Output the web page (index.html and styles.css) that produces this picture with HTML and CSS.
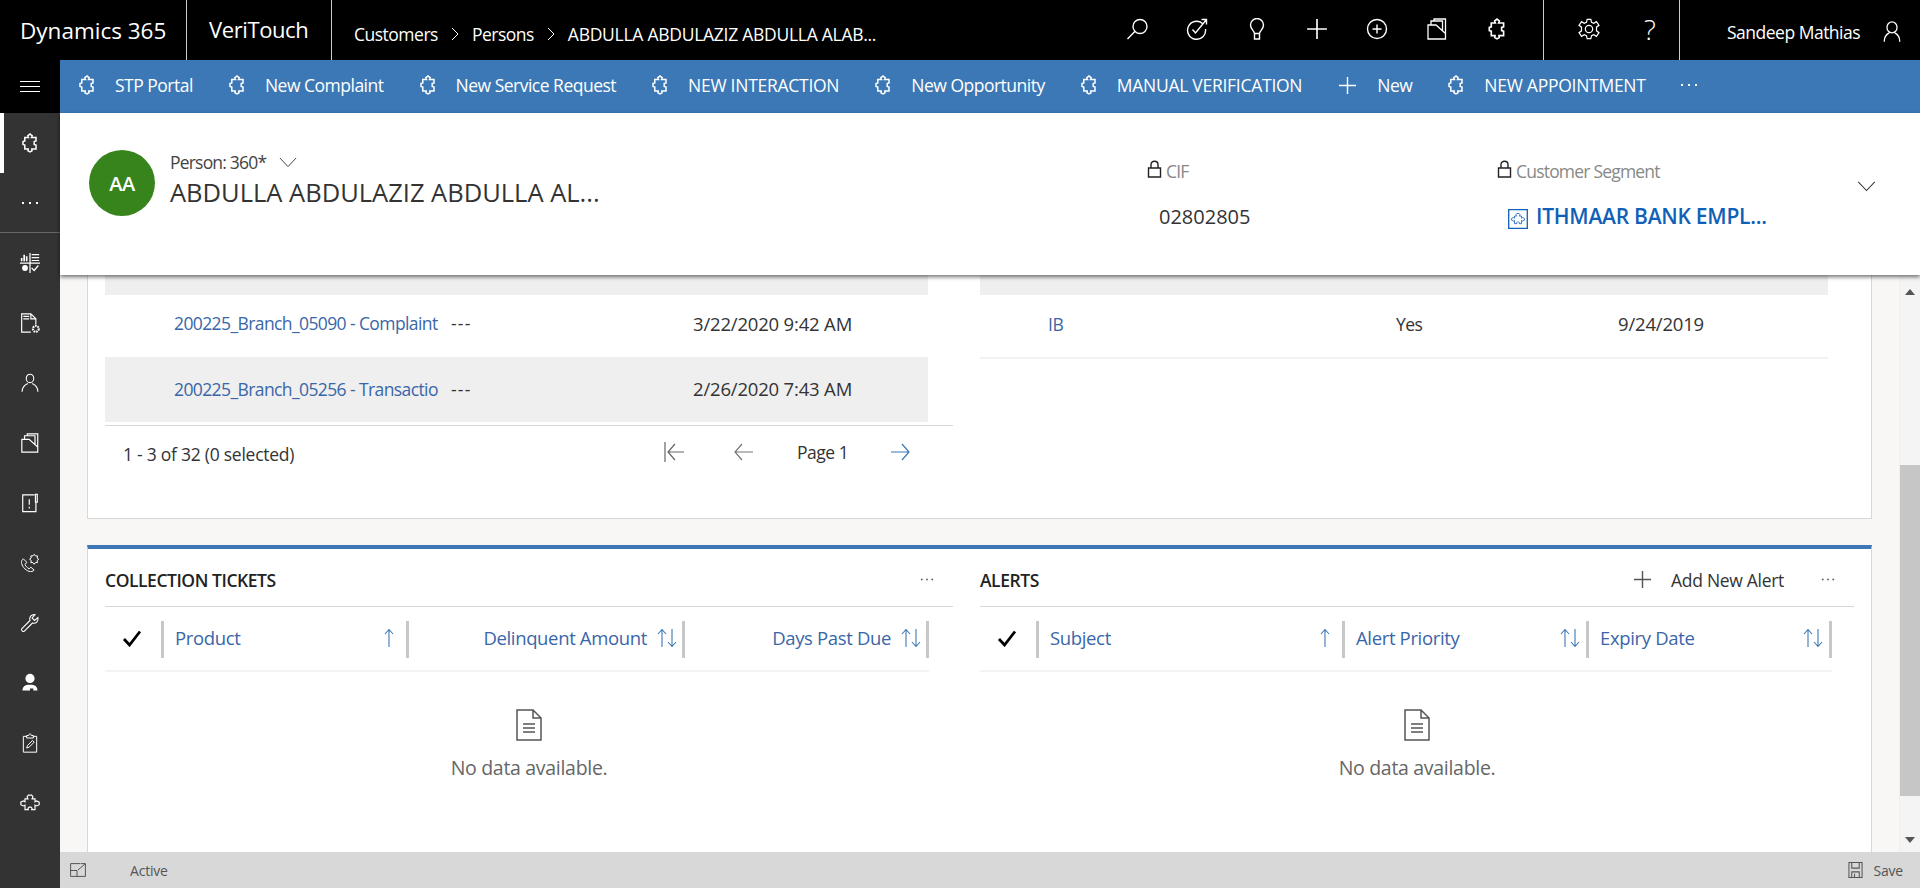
FILE: index.html
```html
<!DOCTYPE html>
<html lang="en">
  <head>
    <meta charset="UTF-8" />
    <title>Person: 360 - Dynamics 365</title>
    <link rel="stylesheet" href="styles.css">
  </head>
  <body>
    <!-- shared icons -->
    <svg class="defs" width="0" height="0">
      <symbol id="puzzle" viewBox="0 0 16 20">
        <path d="M6.500 4.500L5.800 2.800 8 1 10.200 2.800 9.500 4.500H14V8L12.200 8.500V11.500L14 12V16H9.800L10 17.800 8 19 6 17.800 6.200 16H2.800V12L1 11.500V8.500L2.800 8V4.500Z" fill="none" stroke="currentColor" stroke-width="1.500"/>
      </symbol>
      <symbol id="piece" viewBox="0 0 24 22">
        <path d="M6 6H9.500L8.500 3.500 10 1.500H14L15.500 3.500 14.500 6H18V9.500L20 8.500 23 10V13L20 14.500 18 13.500V19H14L14.500 17.500 13 16H11L9.500 17.500 10 19H6V13.500L4 14.500 1 13V10L4 8.500 6 9.500Z" fill="none" stroke="currentColor" stroke-width="1.400"/>
      </symbol>
      <symbol id="plus" viewBox="0 0 20 20">
        <path d="M10 1V19M1 10H19" fill="none" stroke="currentColor" stroke-width="1.500"/>
      </symbol>
      <symbol id="dots" viewBox="0 0 18 4">
        <path d="M1 1h2v2H1zM8 1h2v2H8zM15 1h2v2h-2z" fill="currentColor"/>
      </symbol>
      <symbol id="chev" viewBox="0 0 20 12">
        <path d="M1 1L10 10.500 19 1" fill="none" stroke="currentColor" stroke-width="1.100"/>
      </symbol>
      <symbol id="lock" viewBox="0 0 14 18">
        <path d="M1 8H13V17H1ZM3.500 8V4.500C3.500 .2 10.500 .2 10.500 4.500V8" fill="none" stroke="currentColor" stroke-width="1.400"/>
      </symbol>
      <symbol id="up" viewBox="0 0 10 20">
        <path d="M5 19V1.500M1 6L5 1.500 9 6" fill="none" stroke="currentColor" stroke-width="1.100"/>
      </symbol>
      <symbol id="updown" viewBox="0 0 20 20">
        <path d="M5 19V1.500M1 6L5 1.500 9 6M15 1V18.500M11 14L15 18.500 19 14" fill="none" stroke="currentColor" stroke-width="1.100"/>
      </symbol>
      <symbol id="check" viewBox="0 0 20 17">
        <path d="M2 9L7.500 15 18 1.500" fill="none" stroke="currentColor" stroke-width="2.800"/>
      </symbol>
      <symbol id="nodata" viewBox="0 0 26 32">
        <path d="M1 1H17L25 9V31H1ZM17 1V9H25M7 15H19M7 19H19M7 23H19" fill="none" stroke="currentColor" stroke-width="1.500"/>
      </symbol>
      <symbol id="folder" viewBox="0 0 20 22">
        <path d="M1 7H9L18.500 15.500V21H1ZM4 7V3H15.500V12.500M7 3V1H18.500V15.500" fill="none" stroke="currentColor" stroke-width="1.300"/>
      </symbol>
    </svg>

    <!-- BARRA SUPERIOR -->
    <header class="topbar">
      <div class="brand">Dynamics 365</div>
      <div class="app-name">VeriTouch</div>
      <nav class="crumbs">
        <span>Customers</span>
        <svg class="crumb-sep" viewBox="0 0 8 14"><path d="M1 1L7 7 1 13" fill="none" stroke="currentColor"/></svg>
        <span>Persons</span>
        <svg class="crumb-sep" viewBox="0 0 8 14"><path d="M1 1L7 7 1 13" fill="none" stroke="currentColor"/></svg>
        <span class="caps">ABDULLA ABDULAZIZ ABDULLA ALAB...</span>
      </nav>
      <div class="top-icons">
        <svg class="top-icon" viewBox="0 0 22 22"><path d="M1.500 21L9.500 12.800M21 8.500A7 7 0 1 1 7 8.500A7 7 0 1 1 21 8.500Z" fill="none" stroke="currentColor" stroke-width="1.400"/></svg>
        <svg class="top-icon" viewBox="0 0 22 22"><path d="M16.500 5.500A9 9 0 1 0 19.500 11M6.500 11.500L9.500 15 20.500 1.500M15.500 1.500H20.500V6.500" fill="none" stroke="currentColor" stroke-width="1.400"/></svg>
        <svg class="top-icon" viewBox="0 0 22 22"><path d="M8.500 15.500C8 12.500 4.500 11 4.500 7A6.500 6.500 0 0 1 17.500 7C17.500 11 14 12.500 13.500 15.500ZM8.500 15.500V21H13.500V15.500" fill="none" stroke="currentColor" stroke-width="1.400"/></svg>
        <svg class="top-icon"><use href="#plus"/></svg>
        <svg class="top-icon" viewBox="0 0 22 22"><path d="M20.500 11A9.500 9.500 0 1 1 1.500 11A9.500 9.500 0 1 1 20.500 11ZM11 6.500V15.500M6.500 11H15.500" fill="none" stroke="currentColor" stroke-width="1.400"/></svg>
        <svg class="top-icon"><use href="#folder"/></svg>
        <svg class="top-icon"><use href="#puzzle"/></svg>
      </div>
      <div class="top-tools">
        <svg class="top-icon" viewBox="0 0 24 24"><path d="M10 1.500H14L14.800 4.800 17.200 5.800 20.100 4 22.900 8 20.200 10 20.200 14 22.900 16 20.100 20 17.200 18.200 14.800 19.200 14 22.500H10L9.200 19.200 6.800 18.200 3.900 20 1.100 16 3.800 14 3.800 10 1.100 8 3.900 4 6.800 5.800 9.200 4.800ZM16 12A4 4 0 1 1 8 12A4 4 0 1 1 16 12Z" fill="none" stroke="currentColor" stroke-width="1.300"/></svg>
        <span class="help">?</span>
      </div>
      <div class="user">
        <span>Sandeep Mathias</span>
        <svg class="top-icon" viewBox="0 0 22 24"><path d="M16.500 7A5.500 6 0 1 1 5.500 7A5.500 6 0 1 1 16.500 7ZM2.500 22.500C2.500 17 5 14.500 8 13M19.500 22.500C19.500 17 17 14.500 14 13" fill="none" stroke="currentColor" stroke-width="1.400"/></svg>
      </div>
    </header>

    <div class="app">
      <!-- MENU LATERAL -->
      <aside class="sidebar">
        <div class="burger"><span></span><span></span><span></span></div>
        <div class="side-item selected"><svg class="side-icon"><use href="#puzzle"/></svg></div>
        <div class="side-item more"><svg class="side-dots"><use href="#dots"/></svg></div>
        <div class="side-item">
          <svg class="side-icon" viewBox="0 0 24 24"><path d="M0 12H24M12 0V24" fill="none" stroke="currentColor" stroke-width="1.500"/><path d="M2 10V6M5 10V2M8 10V4" fill="none" stroke="currentColor" stroke-width="2"/><path d="M14 2H23M14 5.500H23M14 9H23" fill="none" stroke="currentColor" stroke-width="1.400"/><circle cx="6" cy="18" r="3.500" fill="currentColor"/><path d="M14 18L17 21 22 15" fill="none" stroke="currentColor" stroke-width="1.500"/></svg>
        </div>
        <div class="side-item">
          <svg class="side-icon" viewBox="0 0 24 24"><path d="M13 23H2V1H13L19 7V14M13 1V7H19M4 4H11M4 7H11" fill="none" stroke="currentColor" stroke-width="1.400"/><circle cx="19" cy="19" r="3.500" fill="none" stroke="currentColor" stroke-width="2.500" stroke-dasharray="2 1"/></svg>
        </div>
        <div class="side-item">
          <svg class="side-icon" viewBox="0 0 22 24"><path d="M6.500 6.500A4.500 5 0 1 1 15.500 6.500A4.500 5 0 1 1 6.500 6.500ZM1.500 22.500C1.500 17 5 14 8.500 12.500M20.500 22.500C20.500 17 17 14 13.500 12.500" fill="none" stroke="currentColor" stroke-width="1.300"/></svg>
        </div>
        <div class="side-item"><svg class="side-icon"><use href="#folder"/></svg></div>
        <div class="side-item">
          <svg class="side-icon" viewBox="0 0 20 22"><path d="M15 2H2V20.500H16.500V10M16 1.500H18V10H16ZM9.200 7V13M9.200 15V17" fill="none" stroke="currentColor" stroke-width="1.300"/></svg>
        </div>
        <div class="side-item">
          <svg class="side-icon" viewBox="0 0 24 24"><path d="M4 7L8 11 6 14C7 16 8.500 17.500 11 19L13 17 17 20.500C14 24 8 22 4.500 17.500 1 13 1 9 4 7ZM17 1.500L18.500 3.500H21L20.500 6 22.500 7.500 20.500 9 21 11.500H18.500L17 13.500 15.500 11.500H13L13.500 9 11.500 7.500 13.500 6 13 3.500H15.500Z" fill="none" stroke="currentColor" stroke-width="1.200"/></svg>
        </div>
        <div class="side-item">
          <svg class="side-icon" viewBox="0 0 24 24"><path d="M2 19L12 9C10.500 5 13.500 1.500 18 2L14.500 6 17.500 9 21.500 5.500C22.500 9.500 19 13.500 15 12L5 22C3.500 23 1 20.500 2 19Z" fill="none" stroke="currentColor" stroke-width="1.300"/></svg>
        </div>
        <div class="side-item">
          <svg class="side-icon" viewBox="0 0 22 24"><circle cx="11" cy="6.500" r="5.500" fill="currentColor"/><path d="M2 21C2 16 5 14 11 14S20 16 20 21H15V18.500H11V21Z" fill="currentColor"/></svg>
        </div>
        <div class="side-item">
          <svg class="side-icon" viewBox="0 0 20 24"><path d="M6 4H2V23H18V4H14M6 6V3H8.500C8.500 .5 11.500 .5 11.500 3H14V6ZM6 18L7 15 13 9 15 11 9 17Z" fill="none" stroke="currentColor" stroke-width="1.200"/></svg>
        </div>
        <div class="side-item"><svg class="side-icon"><use href="#piece"/></svg></div>
      </aside>

      <main class="work">
        <!-- BARRA DE COMANDOS -->
        <div class="cmdbar">
          <a class="cmd"><svg class="cmd-icon"><use href="#puzzle"/></svg>STP Portal</a>
          <a class="cmd"><svg class="cmd-icon"><use href="#puzzle"/></svg>New Complaint</a>
          <a class="cmd"><svg class="cmd-icon"><use href="#puzzle"/></svg>New Service Request</a>
          <a class="cmd caps"><svg class="cmd-icon"><use href="#puzzle"/></svg>NEW INTERACTION</a>
          <a class="cmd"><svg class="cmd-icon"><use href="#puzzle"/></svg>New Opportunity</a>
          <a class="cmd caps"><svg class="cmd-icon"><use href="#puzzle"/></svg>MANUAL VERIFICATION</a>
          <a class="cmd"><svg class="cmd-plus"><use href="#plus"/></svg>New</a>
          <a class="cmd caps"><svg class="cmd-icon"><use href="#puzzle"/></svg>NEW APPOINTMENT</a>
          <svg class="cmd-more"><use href="#dots"/></svg>
        </div>

        <!-- CABECERA DEL REGISTRO -->
        <section class="rec-head">
          <div class="avatar">AA</div>
          <div class="rec-title">
            <div class="rec-form">Person: 360*<svg class="form-chev"><use href="#chev"/></svg></div>
            <h1>ABDULLA ABDULAZIZ ABDULLA AL...</h1>
          </div>
          <div class="rec-field cif">
            <div class="field-label"><svg class="lock"><use href="#lock"/></svg>CIF</div>
            <div class="field-value">02802805</div>
          </div>
          <div class="rec-field segment">
            <div class="field-label"><svg class="lock"><use href="#lock"/></svg>Customer Segment</div>
            <a class="field-link">
              <svg class="seg-icon" viewBox="0 0 20 20"><path d="M.7.7H19.300V19.300H.7Z" fill="none" stroke="currentColor" stroke-width="1.300"/><use href="#piece" x="3" y="3.500" width="14" height="13"/></svg>
              ITHMAAR BANK EMPL...
            </a>
          </div>
          <svg class="head-chev"><use href="#chev"/></svg>
        </section>

        <div class="scroller">
          <div class="content">
            <section class="card card-top">
              <div class="subgrid">
                <div class="grid-left">
                  <div class="band"></div>
                  <div class="row row-left">
                    <a class="link-cell">200225_Branch_05090 - Complaint</a>
                    <span class="dashes">---</span>
                    <span class="date">3/22/2020 9:42 AM</span>
                  </div>
                  <div class="row row-left shaded">
                    <a class="link-cell">200225_Branch_05256 - Transaction</a>
                    <span class="dashes">---</span>
                    <span class="date">2/26/2020 7:43 AM</span>
                  </div>
                  <div class="pager">
                    <span class="pager-count">1 - 3 of 32 (0 selected)</span>
                    <svg class="pg-first" viewBox="0 0 21 20"><path d="M1 0V20M20 10H4M11 2L4 10 11 18" fill="none" stroke="currentColor" stroke-width="1.200"/></svg>
                    <svg class="pg-prev" viewBox="0 0 21 20"><path d="M20 10H2M9 2L2 10 9 18" fill="none" stroke="currentColor" stroke-width="1.200"/></svg>
                    <span class="pg-label">Page 1</span>
                    <svg class="pg-next" viewBox="0 0 21 20"><path d="M1 10H19M12 2L19 10 12 18" fill="none" stroke="currentColor" stroke-width="1.200"/></svg>
                  </div>
                </div>
                <div class="grid-right">
                  <div class="band"></div>
                  <div class="row row-right">
                    <a>IB</a>
                    <span>Yes</span>
                    <span class="date">9/24/2019</span>
                  </div>
                </div>
              </div>
            </section>

            <section class="card card-bottom">
              <div class="subgrid">
                <div class="panel panel-left">
                  <div class="panel-head">
                    <h2>COLLECTION TICKETS</h2>
                    <svg class="panel-dots"><use href="#dots"/></svg>
                  </div>
                  <div class="cols cols-left">
                    <div class="col col-check"><svg class="check"><use href="#check"/></svg></div>
                    <div class="col"><a>Product</a><svg class="sort-up"><use href="#up"/></svg></div>
                    <div class="col col-num"><a>Delinquent Amount</a><svg class="sort-both"><use href="#updown"/></svg></div>
                    <div class="col col-num col-last"><a>Days Past Due</a><svg class="sort-both"><use href="#updown"/></svg></div>
                  </div>
                  <div class="empty">
                    <svg class="empty-icon"><use href="#nodata"/></svg>
                    <p>No data available.</p>
                  </div>
                </div>
                <div class="panel panel-right">
                  <div class="panel-head">
                    <h2>ALERTS</h2>
                    <span class="panel-action"><svg class="action-plus"><use href="#plus"/></svg>Add New Alert</span>
                    <svg class="panel-dots"><use href="#dots"/></svg>
                  </div>
                  <div class="cols cols-right">
                    <div class="col col-check"><svg class="check"><use href="#check"/></svg></div>
                    <div class="col"><a>Subject</a><svg class="sort-up"><use href="#up"/></svg></div>
                    <div class="col"><a>Alert Priority</a><svg class="sort-both"><use href="#updown"/></svg></div>
                    <div class="col col-last"><a>Expiry Date</a><svg class="sort-both"><use href="#updown"/></svg></div>
                  </div>
                  <div class="empty">
                    <svg class="empty-icon"><use href="#nodata"/></svg>
                    <p>No data available.</p>
                  </div>
                </div>
              </div>
            </section>
          </div>

          <div class="scrollbar">
            <svg class="sb-arrow" viewBox="0 0 10 6"><path d="M5 0L10 6H0Z" fill="currentColor"/></svg>
            <div class="sb-track"><div class="sb-thumb"></div></div>
            <svg class="sb-arrow" viewBox="0 0 10 6"><path d="M0 0H10L5 6Z" fill="currentColor"/></svg>
          </div>
        </div>

        <!-- PIE -->
        <footer class="statusbar">
          <svg class="expand" viewBox="0 0 16 14"><path d="M10 .6H.6V13.400H15.400V5M.6 7.500H7V13.400M8 7L15 1M10.500 .6H15.400V5" fill="none" stroke="currentColor"/></svg>
          <span class="status">Active</span>
          <svg class="save-icon" viewBox="0 0 16 18"><path d="M1 1H15V17H1ZM4 1V7H12V1M4 17V11H12V17M7 13V17" fill="none" stroke="currentColor" stroke-width="1.100"/></svg>
          <span>Save</span>
        </footer>
      </main>
    </div>
  </body>
</html>
```

FILE: styles.css
```css
* {
  box-sizing: border-box;
}

html,
body {
  margin: 0;
  height: 100%;
}

body {
  font-family: "Open Sans", "Liberation Sans", sans-serif;
  font-size: 17.5px;
  letter-spacing: -0.5px;
  color: #333;
  display: flex;
  flex-direction: column;
  overflow: hidden;
  background-color: #000;
}

svg {
  display: block;
  flex: none;
}

.defs {
  position: absolute;
}

a {
  color: #3a66a8;
}

.caps {
  letter-spacing: -0.27px;
}

/* top bar */
.topbar {
  height: 60px;
  flex: none;
  display: flex;
  align-items: stretch;
  background-color: #000;
  color: #fff;
}

.brand {
  width: 187px;
  padding-left: 20px;
  font-size: 22.5px;
  letter-spacing: 0;
  line-height: 62px;
  border-right: 1px solid #ccc;
}

.app-name {
  width: 145px;
  padding-left: 22px;
  font-size: 22px;
  letter-spacing: -0.4px;
  line-height: 58px;
  border-right: 1px solid #ccc;
}

.crumbs {
  flex: 1;
  min-width: 0;
  padding-left: 22px;
  padding-top: 8px;
  display: flex;
  align-items: center;
  gap: 13px;
  white-space: nowrap;
}

.crumb-sep {
  width: 8px;
  height: 14px;
}

.top-icons {
  display: flex;
  align-items: center;
  flex: none;
  width: 422px;
  padding: 0 35px 2px 0;
  justify-content: flex-end;
  gap: 38px;
  border-right: 1px solid #ccc;
}

.top-icon {
  width: 22px;
  height: 22px;
}

.top-tools {
  display: flex;
  align-items: center;
  flex: none;
  gap: 44px;
  width: 136px;
  padding: 0 0 2px 34px;
  border-right: 1px solid #ccc;
}

.help {
  font-size: 28px;
  font-weight: 300;
  line-height: 34px;
}

.user {
  display: flex;
  align-items: center;
  flex: none;
  width: 240px;
  gap: 21px;
  padding: 4px 0 0 47px;
  white-space: nowrap;
}

/* app */
.app {
  flex: 1;
  min-height: 0;
  display: flex;
}

.sidebar {
  width: 60px;
  flex: none;
  background-color: #333;
  color: #fff;
}

.burger {
  height: 53px;
  background-color: #000;
  display: flex;
  flex-direction: column;
  justify-content: center;
  align-items: center;
  gap: 4px;
}

.burger span {
  display: block;
  width: 20px;
  height: 1px;
  background-color: #fff;
}

.side-item {
  height: 60px;
  display: flex;
  align-items: center;
  justify-content: center;
}

.side-item.selected {
  border-left: 4px solid #fff;
  padding-right: 4px;
}

.side-item.more {
  border-bottom: 1px solid #666;
}

.side-icon {
  width: 20px;
  height: 20px;
}

.side-dots {
  width: 20px;
  height: 4px;
}

.work {
  flex: 1;
  min-width: 0;
  display: flex;
  flex-direction: column;
}

/* command bar */
.cmdbar {
  height: 53px;
  flex: none;
  display: flex;
  align-items: center;
  padding: 0 0 3px 19px;
  background-color: #3b78b5;
  color: #fff;
}

.cmd {
  display: flex;
  align-items: center;
  color: #fff;
  margin-right: 36px;
}

.cmd-icon {
  width: 16px;
  height: 20px;
  margin-right: 20px;
}

.cmd-plus {
  width: 19px;
  height: 19px;
  margin-right: 20px;
}

.cmd-more {
  width: 18px;
  height: 4px;
  margin-left: -2px;
}

/* record header */
.rec-head {
  height: 162px;
  flex: none;
  display: flex;
  position: relative;
  z-index: 1;
  padding-left: 29px;
  background-color: #fff;
  box-shadow: 0 2px 4px rgba(0, 0, 0, 0.55);
}

.avatar {
  width: 66px;
  height: 66px;
  margin-top: 37px;
  border-radius: 50%;
  background-color: #37831c;
  color: #fff;
  font-size: 20px;
  font-weight: 600;
  line-height: 68px;
  text-align: center;
}

.rec-title {
  width: 992px;
  padding: 36px 0 0 15px;
}

.rec-form {
  display: flex;
  align-items: center;
  gap: 13px;
  line-height: 26px;
  letter-spacing: -0.8px;
  color: #444;
}

.form-chev {
  width: 18px;
  height: 11px;
}

.rec-title h1 {
  margin: 1px 0 0;
  font-size: 25.5px;
  font-weight: 400;
  line-height: 32px;
  letter-spacing: 0;
}

.rec-field {
  padding-top: 47px;
}

.cif {
  width: 350px;
}

.segment {
  width: 360px;
}

.field-label {
  display: flex;
  align-items: center;
  gap: 4px;
  color: #888;
  line-height: 22px;
  letter-spacing: -0.8px;
}

.lock {
  width: 15px;
  height: 18px;
  color: #222;
  margin-top: -4px;
}

.field-value {
  margin: 21px 0 0 12px;
  font-size: 20px;
  line-height: 28px;
  letter-spacing: 0;
  color: #333;
}

.field-link {
  display: flex;
  align-items: center;
  gap: 8px;
  margin: 20px 0 0 11px;
  font-size: 21px;
  line-height: 28px;
  font-weight: 600;
  letter-spacing: -0.25px;
  color: #1160b7;
}

.seg-icon {
  width: 20px;
  height: 20px;
  margin-top: 6px;
}

.head-chev {
  width: 19px;
  height: 11px;
  margin-top: 68px;
}

/* scroll area */
.scroller {
  flex: 1;
  min-height: 0;
  display: flex;
  background-color: #f8f7f6;
}

.content {
  flex: 1;
  min-width: 0;
  overflow: hidden;
  padding-left: 27px;
  margin-right: 27px;
}

.card {
  background-color: #fff;
  border: 1px solid #d8d8d8;
  border-top: none;
  padding-left: 17px;
}

.card-top {
  height: 244px;
}

.card-bottom {
  height: 307px;
  margin-top: 26px;
  border-top: 4px solid #3b78b5;
  border-bottom: none;
}

.subgrid {
  display: grid;
  grid-template-columns: 848px 874px;
  column-gap: 27px;
}

.band {
  width: 823px;
  height: 20px;
  background-color: #efefef;
}

.grid-right .band {
  width: 848px;
}

.row {
  display: grid;
  align-items: center;
  white-space: nowrap;
}

.row-left {
  width: 823px;
  height: 62px;
  padding: 0 0 4px 69px;
  grid-template-columns: 277px 242px 1fr;
  border-bottom: 2px solid transparent;
}

.row-left.shaded {
  height: 65px;
  padding-bottom: 0;
  background-color: #efefef;
}

.row-right {
  width: 848px;
  height: 64px;
  padding: 0 0 5px 68px;
  grid-template-columns: 348px 222px 1fr;
  border-bottom: 2px solid #f2f2f2;
}

.date {
  font-size: 18.5px;
  letter-spacing: -0.18px;
}

.dashes {
  letter-spacing: 1.2px;
}

.link-cell {
  display: block;
  width: 265px;
  overflow: hidden;
  white-space: nowrap;
  letter-spacing: -0.6px;
}

.pager {
  height: 58px;
  display: flex;
  align-items: center;
  padding: 0 0 6px 18px;
  border-top: 1px solid #d8d8d8;
  margin-top: 3px;
}

.pager-count {
  width: 541px;
  padding-top: 5px;
  letter-spacing: -0.25px;
}

.pg-first,
.pg-prev,
.pg-next {
  width: 21px;
  height: 20px;
}

.pg-first {
  color: #666;
  margin-right: 48px;
}

.pg-prev {
  color: #777;
  margin-right: 43px;
}

.pg-next {
  color: #3b78b5;
}

.pg-label {
  width: 93px;
}

/* bottom panels */
.panel-head {
  height: 58px;
  display: flex;
  align-items: center;
  border-bottom: 1px solid #d8d8d8;
  padding: 4px 17px 0 0;
}

.panel-head h2 {
  flex: 1;
  margin: 0;
  font-size: 17.5px;
  font-weight: 600;
  letter-spacing: -0.45px;
  color: #222;
}

.panel-action {
  display: flex;
  align-items: center;
  gap: 19px;
  margin-right: 35px;
  letter-spacing: -0.3px;
}

.action-plus {
  width: 19px;
  height: 19px;
  color: #555;
}

.panel-dots {
  width: 18px;
  height: 3px;
  color: #444;
}

.cols {
  display: grid;
  width: fit-content;
  padding: 14px 0 12px;
  border-bottom: 2px solid #f3f3f3;
}

.cols-left {
  grid-template-columns: 56px 245px 276px 247px;
}

.cols-right {
  grid-template-columns: 56px 306px 244px 246px;
}

.col {
  height: 37px;
  display: flex;
  align-items: center;
  justify-content: space-between;
  padding: 0 6px 4px 11px;
  border-left: 3px solid #c8c8c8;
  font-size: 18.5px;
  letter-spacing: -0.35px;
}

.col-check {
  border-left: none;
  padding: 0 0 2px 17px;
}

.col-num {
  justify-content: flex-end;
  gap: 10px;
  padding: 0 5px 4px 0;
}

.col-last {
  border-right: 3px solid #c8c8c8;
}

.check {
  width: 20px;
  height: 17px;
  color: #000;
}

.sort-up {
  width: 10px;
  height: 20px;
  color: #3b78b5;
  margin-right: 6px;
}

.sort-both {
  width: 20px;
  height: 20px;
  color: #3b78b5;
}

.empty {
  padding-top: 37px;
  display: flex;
  flex-direction: column;
  align-items: center;
  color: #666;
}

.empty-icon {
  width: 26px;
  height: 32px;
  color: #555;
}

.empty p {
  margin: 13px 0 0;
  font-size: 19.5px;
  letter-spacing: -0.3px;
}

/* scrollbar */
.scrollbar {
  width: 21px;
  flex: none;
  display: flex;
  flex-direction: column;
  align-items: center;
  background-color: #f4f4f4;
  border-left: 1px solid #f0f0f0;
  color: #555;
}

.sb-arrow {
  width: 10px;
  height: 6px;
  margin: 14px 0 9px;
}

.sb-track {
  flex: 1;
  width: 100%;
  padding-top: 161px;
}

.sb-thumb {
  height: 331px;
  background-color: #c6c6c6;
}

/* status bar */
.statusbar {
  height: 36px;
  flex: none;
  display: flex;
  align-items: center;
  padding-left: 10px;
  background-color: #d8d8d8;
  color: #555;
  font-size: 14px;
  letter-spacing: -0.2px;
}

.expand {
  width: 16px;
  height: 14px;
}

.status {
  flex: 1;
  padding-left: 44px;
}

.save-icon {
  width: 15px;
  height: 18px;
  margin-right: 10px;
}

.statusbar span:last-child {
  padding-right: 17px;
}
```
